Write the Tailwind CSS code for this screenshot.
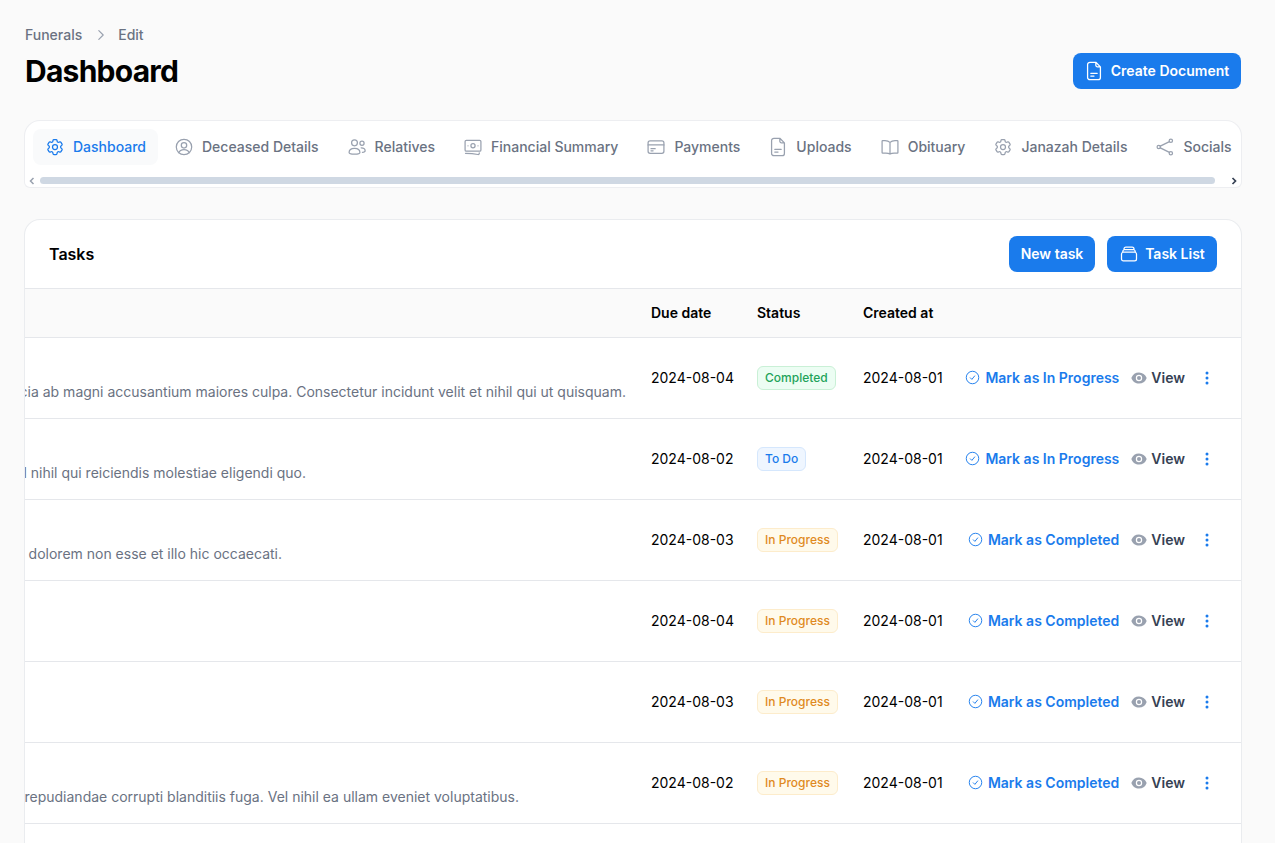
<!DOCTYPE html>
<html>
<head>
  <meta charset="utf-8">
  <meta name="viewport" content="width=device-width">
  <title>Dashboard</title>
  <script src="https://cdn.jsdelivr.net/npm/@tailwindcss/browser@4"></script>
</head>
<body class="h-screen overflow-hidden bg-[#fafafa] font-['Inter',sans-serif] text-sm text-black">
  <div class="pl-[24px] pr-[33px] pt-[25px]">

    <!-- Page header -->
    <div class="ml-px mr-px flex items-end justify-between">
      <div>
        <nav class="flex h-5 items-center text-sm font-medium text-gray-500">
          <span>Funerals</span>
          <svg class="ml-[12px] mr-[10px] h-[14px] w-[14px] text-gray-400" fill="none" viewBox="0 0 24 24" stroke-width="2" stroke="currentColor"><path stroke-linecap="round" stroke-linejoin="round" d="m8.250 4.500 7.500 7.500-7.500 7.500"/></svg>
          <span>Edit</span>
        </nav>
        <h1 class="mt-2 text-3xl font-bold tracking-tight">Dashboard</h1>
      </div>
      <button class="flex h-9 w-[168px] items-center justify-center gap-[6px] rounded-lg bg-[#1a7bec] pr-[2px] text-sm font-semibold text-white">
        <svg class="h-[22px] w-[22px]" fill="none" viewBox="0 0 24 24" stroke-width="1.400" stroke="currentColor"><path stroke-linecap="round" stroke-linejoin="round" d="M14 2.500H7.500A2.500 2.500 0 0 0 5 5v14a2.500 2.500 0 0 0 2.500 2.500h9A2.500 2.500 0 0 0 19 19V7.500l-5-5Zm0 0v3.250a1.750 1.750 0 0 0 1.750 1.750H19M8.500 14.500h7M8.500 17.500h3.500"/></svg>
        Create Document
      </button>
    </div>

    <!-- Tabs -->
    <div class="mt-[31px] h-[68px] overflow-hidden rounded-t-2xl rounded-b-md border border-gray-200/70 bg-white">
      <div class="flex h-[52px] items-center gap-1 overflow-hidden whitespace-nowrap pl-2 font-medium text-gray-500">
        <a class="flex h-9 shrink-0 items-center gap-2 rounded-lg bg-gray-50 px-3 text-[#1a7bec]">
          <svg class="h-5 w-5" fill="none" viewBox="0 0 24 24" stroke-width="1.5" stroke="currentColor"><path stroke-linecap="round" stroke-linejoin="round" d="M9.594 3.94c.09-.542.56-.94 1.11-.94h2.593c.55 0 1.02.398 1.11.94l.213 1.281c.063.374.313.686.645.87.074.04.147.083.22.127.325.196.72.257 1.075.124l1.217-.456a1.125 1.125 0 0 1 1.37.49l1.296 2.247a1.125 1.125 0 0 1-.26 1.431l-1.003.827c-.293.241-.438.613-.43.992a7.723 7.723 0 0 1 0 .255c-.008.378.137.75.43.991l1.004.827c.424.35.534.955.26 1.43l-1.298 2.247a1.125 1.125 0 0 1-1.369.491l-1.217-.456c-.355-.133-.75-.072-1.076.124a6.47 6.47 0 0 1-.22.128c-.331.183-.581.495-.644.869l-.213 1.281c-.09.543-.56.94-1.11.94h-2.594c-.55 0-1.019-.398-1.11-.94l-.213-1.281c-.062-.374-.312-.686-.644-.87a6.52 6.52 0 0 1-.22-.127c-.325-.196-.72-.257-1.076-.124l-1.217.456a1.125 1.125 0 0 1-1.369-.49l-1.297-2.247a1.125 1.125 0 0 1 .26-1.431l1.004-.827c.292-.24.437-.613.43-.991a6.932 6.932 0 0 1 0-.255c.007-.38-.138-.751-.43-.992l-1.004-.827a1.125 1.125 0 0 1-.26-1.43l1.297-2.247a1.125 1.125 0 0 1 1.37-.491l1.216.456c.356.133.751.072 1.076-.124.072-.044.146-.086.22-.128.332-.183.582-.495.644-.869l.214-1.28Z"/><path stroke-linecap="round" stroke-linejoin="round" d="M15 12a3 3 0 1 1-6 0 3 3 0 0 1 6 0Z"/></svg>
          Dashboard
        </a>
        <a class="flex h-9 shrink-0 items-center gap-2 px-3">
          <svg class="h-5 w-5 text-gray-400" fill="none" viewBox="0 0 24 24" stroke-width="1.5" stroke="currentColor"><circle cx="12" cy="12" r="9.250"/><circle cx="12" cy="10" r="3.250"/><path stroke-linecap="round" d="M5.800 18.800c.8-2.400 3.200-3.800 6.200-3.800s5.400 1.400 6.200 3.800"/></svg>
          Deceased Details
        </a>
        <a class="flex h-9 shrink-0 items-center gap-2 px-3">
          <svg class="h-5 w-5 text-gray-400" fill="none" viewBox="0 0 24 24" stroke-width="1.5" stroke="currentColor"><circle cx="9" cy="7" r="3.500"/><circle cx="18" cy="7.500" r="2.500"/><path stroke-linecap="round" stroke-linejoin="round" d="M2.500 18.500c0-3 2.500-5 6.500-5s6.500 2 6.500 5c0 1.500-1.500 2-6.500 2s-6.500-.5-6.500-2ZM17 13c2.800 0 4.750 1.300 4.750 3.500 0 1.200-1 1.800-3.250 1.800"/></svg>
          Relatives
        </a>
        <a class="flex h-9 shrink-0 items-center gap-2 px-3">
          <svg class="h-5 w-5 text-gray-400" fill="none" viewBox="0 0 24 24" stroke-width="1.5" stroke="currentColor"><rect x="2.500" y="4" width="19" height="13" rx="1.500"/><circle cx="12" cy="10.500" r="2.500"/><path stroke-linecap="round" stroke-linejoin="round" d="M6 10.500h.01M18 10.500h.01M3 19.500c5.500 0 10 .4 15 1.500 .8.100 1.500-.4 1.500-1.200V19"/></svg>
          Financial Summary
        </a>
        <a class="flex h-9 shrink-0 items-center gap-2 px-3">
          <svg class="h-5 w-5 text-gray-400" fill="none" viewBox="0 0 24 24" stroke-width="1.5" stroke="currentColor"><rect x="2.500" y="4.500" width="19" height="15" rx="2.500"/><path stroke-linecap="round" d="M2.500 9.500h19M6 14h5M6 16.500h2.500"/></svg>
          Payments
        </a>
        <a class="flex h-9 shrink-0 items-center gap-2 px-3">
          <svg class="-mx-px h-[22px] w-[22px] text-gray-400" fill="none" viewBox="0 0 24 24" stroke-width="1.400" stroke="currentColor"><path stroke-linecap="round" stroke-linejoin="round" d="M14 2.500H7.500A2.500 2.500 0 0 0 5 5v14a2.500 2.500 0 0 0 2.500 2.500h9A2.500 2.500 0 0 0 19 19V7.500l-5-5Zm0 0v3.250a1.750 1.750 0 0 0 1.750 1.750H19M8.500 14.500h7M8.500 17.500h3.500"/></svg>
          Uploads
        </a>
        <a class="flex h-9 shrink-0 items-center gap-2 px-3">
          <svg class="h-5 w-5 text-gray-400" fill="none" viewBox="0 0 24 24" stroke-width="1.5" stroke="currentColor"><path stroke-linecap="round" stroke-linejoin="round" d="M12 6.500v14M12 6.500c-1.500-1.500-3.500-2.250-6-2.250H3.250c-.4 0-.75.35-.75.75v13.500c0 .4.350.750.750.750H7c2 0 3.800.450 5 1.250 1.200-.8 3-1.250 5-1.250h3.750c.4 0 .75-.35.75-.75V5c0-.4-.35-.75-.75-.75H18c-2.500 0-4.500.75-6 2.250Z"/></svg>
          Obituary
        </a>
        <a class="flex h-9 shrink-0 items-center gap-2 px-3">
          <svg class="h-5 w-5 text-gray-400" fill="none" viewBox="0 0 24 24" stroke-width="1.5" stroke="currentColor"><path stroke-linecap="round" stroke-linejoin="round" d="M9.594 3.94c.09-.542.56-.94 1.11-.94h2.593c.55 0 1.02.398 1.11.94l.213 1.281c.063.374.313.686.645.87.074.04.147.083.22.127.325.196.72.257 1.075.124l1.217-.456a1.125 1.125 0 0 1 1.37.49l1.296 2.247a1.125 1.125 0 0 1-.26 1.431l-1.003.827c-.293.241-.438.613-.43.992a7.723 7.723 0 0 1 0 .255c-.008.378.137.75.43.991l1.004.827c.424.35.534.955.26 1.43l-1.298 2.247a1.125 1.125 0 0 1-1.369.491l-1.217-.456c-.355-.133-.75-.072-1.076.124a6.47 6.47 0 0 1-.22.128c-.331.183-.581.495-.644.869l-.213 1.281c-.09.543-.56.94-1.11.94h-2.594c-.55 0-1.019-.398-1.11-.94l-.213-1.281c-.062-.374-.312-.686-.644-.87a6.52 6.52 0 0 1-.22-.127c-.325-.196-.72-.257-1.076-.124l-1.217.456a1.125 1.125 0 0 1-1.369-.49l-1.297-2.247a1.125 1.125 0 0 1 .26-1.431l1.004-.827c.292-.24.437-.613.43-.991a6.932 6.932 0 0 1 0-.255c.007-.38-.138-.751-.43-.992l-1.004-.827a1.125 1.125 0 0 1-.26-1.43l1.297-2.247a1.125 1.125 0 0 1 1.37-.491l1.216.456c.356.133.751.072 1.076-.124.072-.044.146-.086.22-.128.332-.183.582-.495.644-.869l.214-1.28Z"/><path stroke-linecap="round" stroke-linejoin="round" d="M15 12a3 3 0 1 1-6 0 3 3 0 0 1 6 0Z"/></svg>
          Janazah Details
        </a>
        <a class="flex h-9 shrink-0 items-center gap-2 px-3">
          <svg class="h-5 w-5 text-gray-400" fill="none" viewBox="0 0 24 24" stroke-width="1.5" stroke="currentColor"><circle cx="19" cy="4.500" r="2"/><circle cx="19" cy="19.500" r="2"/><circle cx="4.500" cy="12" r="2"/><path stroke-linecap="round" d="m6.300 11 11-5.500M6.300 13l11 5.500"/></svg>
          Socials
        </a>
      </div>
      <!-- Scrollbar -->
      <div class="mt-[2px] flex h-[11px] items-center pl-[3px] pr-[3px]">
        <svg class="h-2 w-2 shrink-0 text-gray-400" fill="none" viewBox="0 0 8 8" stroke-width="1.500" stroke="currentColor"><path d="M5.500 1 2.500 4l3 3"/></svg>
        <div class="ml-[4px] h-[7px] flex-1 rounded-full bg-[#cfd8e3]"></div>
        <svg class="ml-[15px] h-2 w-2 shrink-0 text-gray-700" fill="none" viewBox="0 0 8 8" stroke-width="1.700" stroke="currentColor"><path d="M2.500 1l3 3-3 3"/></svg>
      </div>
    </div>

    <!-- Tasks -->
    <div class="mt-[31px] overflow-hidden rounded-t-2xl border border-gray-200/80 bg-white">
      <div class="flex h-[69px] items-center justify-between border-b border-gray-200 pl-6 pr-[24px]">
        <h2 class="text-base font-semibold">Tasks</h2>
        <div class="flex gap-3">
          <button class="h-9 w-[86px] rounded-lg bg-[#1a7bec] text-sm font-semibold text-white">New task</button>
          <button class="flex h-9 w-[110px] items-center justify-center gap-[6px] rounded-lg bg-[#1a7bec] text-sm font-semibold text-white">
            <svg class="h-5 w-5" fill="none" viewBox="0 0 24 24" stroke-width="1.5" stroke="currentColor"><path stroke-linecap="round" stroke-linejoin="round" d="M6 6.878V6a2.250 2.250 0 0 1 2.250-2.250h7.500A2.250 2.250 0 0 1 18 6v.878m-12 0c.235-.083.487-.128.75-.128h10.500c.263 0 .515.045.750.128m-12 0A2.250 2.250 0 0 0 4.500 9v.878m13.500-3A2.250 2.250 0 0 1 19.500 9v.878m0 0a2.246 2.246 0 0 0-.75-.128H5.250c-.263 0-.515.045-.75.128m15 0A2.250 2.250 0 0 1 21 12v6a2.250 2.250 0 0 1-2.250 2.250H5.250A2.250 2.250 0 0 1 3 18v-6c0-.98.626-1.813 1.500-2.122"/></svg>
            Task List
          </button>
        </div>
      </div>

      <table class="w-full table-fixed border-collapse text-left">
        <colgroup>
          <col class="w-[614px]"><col class="w-[106px]"><col class="w-[106px]"><col class="w-[104px]"><col>
        </colgroup>
        <thead>
          <tr class="h-[48px] border-b border-gray-200 bg-[#fafafa] font-semibold">
            <th></th>
            <th class="px-3 font-semibold">Due date</th>
            <th class="px-3 font-semibold">Status</th>
            <th class="px-3 font-semibold">Created at</th>
            <th></th>
          </tr>
        </thead>
        <tbody>
          <tr class="h-[81px] border-b border-gray-200">
            <td class="align-top"><div class="flex justify-end overflow-hidden whitespace-nowrap pr-[13px] pt-[44px] text-gray-500">Officia ab magni accusantium maiores culpa. Consectetur incidunt velit et nihil qui ut quisquam.</div></td>
            <td class="whitespace-nowrap px-3">2024-08-04</td>
            <td class="whitespace-nowrap px-3"><span class="inline-block rounded-md border border-[#c9f0d6] bg-[#ecfdf3] px-[7px] py-[3px] text-xs font-medium text-[#22a35a]">Completed</span></td>
            <td class="whitespace-nowrap px-3">2024-08-01</td>
            <td class="pr-[26px]">
              <div class="flex items-center justify-end font-semibold">
                <svg class="mr-[5px] h-[15px] w-[15px] text-[#1a7bec]" fill="none" viewBox="0 0 24 24" stroke-width="1.5" stroke="currentColor"><circle cx="12" cy="12" r="10"/><path stroke-linecap="round" stroke-linejoin="round" d="m8.500 12.500 2.500 2.500 4.500-5.500"/></svg>
                <a class="text-[#1a7bec]">Mark as In Progress</a>
                <svg class="ml-3 mr-1 h-4 w-4 text-gray-400" viewBox="0 0 20 20" fill="currentColor"><path d="M10 12.500a2.500 2.500 0 1 0 0-5 2.500 2.500 0 0 0 0 5Z"/><path fill-rule="evenodd" d="M.664 10.590a1.651 1.651 0 0 1 0-1.186A10.004 10.004 0 0 1 10 3c4.257 0 7.893 2.660 9.336 6.410.147.381.146.804 0 1.186A10.004 10.004 0 0 1 10 17c-4.257 0-7.893-2.660-9.336-6.410ZM14 10a4 4 0 1 1-8 0 4 4 0 0 1 8 0Z" clip-rule="evenodd"/></svg>
                <a class="text-gray-700">View</a>
                <svg class="ml-[14px] h-4 w-4 text-[#1a7bec]" fill="currentColor" viewBox="0 0 16 16"><circle cx="8" cy="3" r="1.500"/><circle cx="8" cy="8" r="1.500"/><circle cx="8" cy="13" r="1.500"/></svg>
              </div>
            </td>
          </tr>
          <tr class="h-[81px] border-b border-gray-200">
            <td class="align-top"><div class="flex justify-end overflow-hidden whitespace-nowrap pr-[333px] pt-[44px] text-gray-500">Vel nihil qui reiciendis molestiae eligendi quo.</div></td>
            <td class="whitespace-nowrap px-3">2024-08-02</td>
            <td class="whitespace-nowrap px-3"><span class="inline-block rounded-md border border-[#d5e7fd] bg-[#eff6ff] px-[7px] py-[3px] text-xs font-medium text-[#1a7bec]">To Do</span></td>
            <td class="whitespace-nowrap px-3">2024-08-01</td>
            <td class="pr-[26px]">
              <div class="flex items-center justify-end font-semibold">
                <svg class="mr-[5px] h-[15px] w-[15px] text-[#1a7bec]" fill="none" viewBox="0 0 24 24" stroke-width="1.5" stroke="currentColor"><circle cx="12" cy="12" r="10"/><path stroke-linecap="round" stroke-linejoin="round" d="m8.500 12.500 2.500 2.500 4.500-5.500"/></svg>
                <a class="text-[#1a7bec]">Mark as In Progress</a>
                <svg class="ml-3 mr-1 h-4 w-4 text-gray-400" viewBox="0 0 20 20" fill="currentColor"><path d="M10 12.500a2.500 2.500 0 1 0 0-5 2.500 2.500 0 0 0 0 5Z"/><path fill-rule="evenodd" d="M.664 10.590a1.651 1.651 0 0 1 0-1.186A10.004 10.004 0 0 1 10 3c4.257 0 7.893 2.660 9.336 6.410.147.381.146.804 0 1.186A10.004 10.004 0 0 1 10 17c-4.257 0-7.893-2.660-9.336-6.410ZM14 10a4 4 0 1 1-8 0 4 4 0 0 1 8 0Z" clip-rule="evenodd"/></svg>
                <a class="text-gray-700">View</a>
                <svg class="ml-[14px] h-4 w-4 text-[#1a7bec]" fill="currentColor" viewBox="0 0 16 16"><circle cx="8" cy="3" r="1.500"/><circle cx="8" cy="8" r="1.500"/><circle cx="8" cy="13" r="1.500"/></svg>
              </div>
            </td>
          </tr>
          <tr class="h-[81px] border-b border-gray-200">
            <td class="align-top"><div class="flex justify-end overflow-hidden whitespace-nowrap pr-[357px] pt-[44px] text-gray-500">Et dolorem non esse et illo hic occaecati.</div></td>
            <td class="whitespace-nowrap px-3">2024-08-03</td>
            <td class="whitespace-nowrap px-3"><span class="inline-block rounded-md border border-[#fdeccb] bg-[#fffaeb] px-[7px] py-[3px] text-xs font-medium text-[#df8a1f]">In Progress</span></td>
            <td class="whitespace-nowrap px-3">2024-08-01</td>
            <td class="pr-[26px]">
              <div class="flex items-center justify-end font-semibold">
                <svg class="mr-[5px] h-[15px] w-[15px] text-[#1a7bec]" fill="none" viewBox="0 0 24 24" stroke-width="1.5" stroke="currentColor"><circle cx="12" cy="12" r="10"/><path stroke-linecap="round" stroke-linejoin="round" d="m8.500 12.500 2.500 2.500 4.500-5.500"/></svg>
                <a class="text-[#1a7bec]">Mark as Completed</a>
                <svg class="ml-3 mr-1 h-4 w-4 text-gray-400" viewBox="0 0 20 20" fill="currentColor"><path d="M10 12.500a2.500 2.500 0 1 0 0-5 2.500 2.500 0 0 0 0 5Z"/><path fill-rule="evenodd" d="M.664 10.590a1.651 1.651 0 0 1 0-1.186A10.004 10.004 0 0 1 10 3c4.257 0 7.893 2.660 9.336 6.410.147.381.146.804 0 1.186A10.004 10.004 0 0 1 10 17c-4.257 0-7.893-2.660-9.336-6.410ZM14 10a4 4 0 1 1-8 0 4 4 0 0 1 8 0Z" clip-rule="evenodd"/></svg>
                <a class="text-gray-700">View</a>
                <svg class="ml-[14px] h-4 w-4 text-[#1a7bec]" fill="currentColor" viewBox="0 0 16 16"><circle cx="8" cy="3" r="1.500"/><circle cx="8" cy="8" r="1.500"/><circle cx="8" cy="13" r="1.500"/></svg>
              </div>
            </td>
          </tr>
          <tr class="h-[81px] border-b border-gray-200">
            <td></td>
            <td class="whitespace-nowrap px-3">2024-08-04</td>
            <td class="whitespace-nowrap px-3"><span class="inline-block rounded-md border border-[#fdeccb] bg-[#fffaeb] px-[7px] py-[3px] text-xs font-medium text-[#df8a1f]">In Progress</span></td>
            <td class="whitespace-nowrap px-3">2024-08-01</td>
            <td class="pr-[26px]">
              <div class="flex items-center justify-end font-semibold">
                <svg class="mr-[5px] h-[15px] w-[15px] text-[#1a7bec]" fill="none" viewBox="0 0 24 24" stroke-width="1.5" stroke="currentColor"><circle cx="12" cy="12" r="10"/><path stroke-linecap="round" stroke-linejoin="round" d="m8.500 12.500 2.500 2.500 4.500-5.500"/></svg>
                <a class="text-[#1a7bec]">Mark as Completed</a>
                <svg class="ml-3 mr-1 h-4 w-4 text-gray-400" viewBox="0 0 20 20" fill="currentColor"><path d="M10 12.500a2.500 2.500 0 1 0 0-5 2.500 2.500 0 0 0 0 5Z"/><path fill-rule="evenodd" d="M.664 10.590a1.651 1.651 0 0 1 0-1.186A10.004 10.004 0 0 1 10 3c4.257 0 7.893 2.660 9.336 6.410.147.381.146.804 0 1.186A10.004 10.004 0 0 1 10 17c-4.257 0-7.893-2.660-9.336-6.410ZM14 10a4 4 0 1 1-8 0 4 4 0 0 1 8 0Z" clip-rule="evenodd"/></svg>
                <a class="text-gray-700">View</a>
                <svg class="ml-[14px] h-4 w-4 text-[#1a7bec]" fill="currentColor" viewBox="0 0 16 16"><circle cx="8" cy="3" r="1.500"/><circle cx="8" cy="8" r="1.500"/><circle cx="8" cy="13" r="1.500"/></svg>
              </div>
            </td>
          </tr>
          <tr class="h-[81px] border-b border-gray-200">
            <td></td>
            <td class="whitespace-nowrap px-3">2024-08-03</td>
            <td class="whitespace-nowrap px-3"><span class="inline-block rounded-md border border-[#fdeccb] bg-[#fffaeb] px-[7px] py-[3px] text-xs font-medium text-[#df8a1f]">In Progress</span></td>
            <td class="whitespace-nowrap px-3">2024-08-01</td>
            <td class="pr-[26px]">
              <div class="flex items-center justify-end font-semibold">
                <svg class="mr-[5px] h-[15px] w-[15px] text-[#1a7bec]" fill="none" viewBox="0 0 24 24" stroke-width="1.5" stroke="currentColor"><circle cx="12" cy="12" r="10"/><path stroke-linecap="round" stroke-linejoin="round" d="m8.500 12.500 2.500 2.500 4.500-5.500"/></svg>
                <a class="text-[#1a7bec]">Mark as Completed</a>
                <svg class="ml-3 mr-1 h-4 w-4 text-gray-400" viewBox="0 0 20 20" fill="currentColor"><path d="M10 12.500a2.500 2.500 0 1 0 0-5 2.500 2.500 0 0 0 0 5Z"/><path fill-rule="evenodd" d="M.664 10.590a1.651 1.651 0 0 1 0-1.186A10.004 10.004 0 0 1 10 3c4.257 0 7.893 2.660 9.336 6.410.147.381.146.804 0 1.186A10.004 10.004 0 0 1 10 17c-4.257 0-7.893-2.660-9.336-6.410ZM14 10a4 4 0 1 1-8 0 4 4 0 0 1 8 0Z" clip-rule="evenodd"/></svg>
                <a class="text-gray-700">View</a>
                <svg class="ml-[14px] h-4 w-4 text-[#1a7bec]" fill="currentColor" viewBox="0 0 16 16"><circle cx="8" cy="3" r="1.500"/><circle cx="8" cy="8" r="1.500"/><circle cx="8" cy="13" r="1.500"/></svg>
              </div>
            </td>
          </tr>
          <tr class="h-[81px] border-b border-gray-200">
            <td class="align-top"><div class="flex justify-end overflow-hidden whitespace-nowrap pr-[120px] pt-[44px] text-gray-500">repudiandae corrupti blanditiis fuga. Vel nihil ea ullam eveniet voluptatibus.</div></td>
            <td class="whitespace-nowrap px-3">2024-08-02</td>
            <td class="whitespace-nowrap px-3"><span class="inline-block rounded-md border border-[#fdeccb] bg-[#fffaeb] px-[7px] py-[3px] text-xs font-medium text-[#df8a1f]">In Progress</span></td>
            <td class="whitespace-nowrap px-3">2024-08-01</td>
            <td class="pr-[26px]">
              <div class="flex items-center justify-end font-semibold">
                <svg class="mr-[5px] h-[15px] w-[15px] text-[#1a7bec]" fill="none" viewBox="0 0 24 24" stroke-width="1.5" stroke="currentColor"><circle cx="12" cy="12" r="10"/><path stroke-linecap="round" stroke-linejoin="round" d="m8.500 12.500 2.500 2.500 4.500-5.500"/></svg>
                <a class="text-[#1a7bec]">Mark as Completed</a>
                <svg class="ml-3 mr-1 h-4 w-4 text-gray-400" viewBox="0 0 20 20" fill="currentColor"><path d="M10 12.500a2.500 2.500 0 1 0 0-5 2.500 2.500 0 0 0 0 5Z"/><path fill-rule="evenodd" d="M.664 10.590a1.651 1.651 0 0 1 0-1.186A10.004 10.004 0 0 1 10 3c4.257 0 7.893 2.660 9.336 6.410.147.381.146.804 0 1.186A10.004 10.004 0 0 1 10 17c-4.257 0-7.893-2.660-9.336-6.410ZM14 10a4 4 0 1 1-8 0 4 4 0 0 1 8 0Z" clip-rule="evenodd"/></svg>
                <a class="text-gray-700">View</a>
                <svg class="ml-[14px] h-4 w-4 text-[#1a7bec]" fill="currentColor" viewBox="0 0 16 16"><circle cx="8" cy="3" r="1.500"/><circle cx="8" cy="8" r="1.500"/><circle cx="8" cy="13" r="1.500"/></svg>
              </div>
            </td>
          </tr>
          <tr class="h-[81px]"><td colspan="5"></td></tr>
        </tbody>
      </table>
    </div>

  </div>
</body>
</html>
